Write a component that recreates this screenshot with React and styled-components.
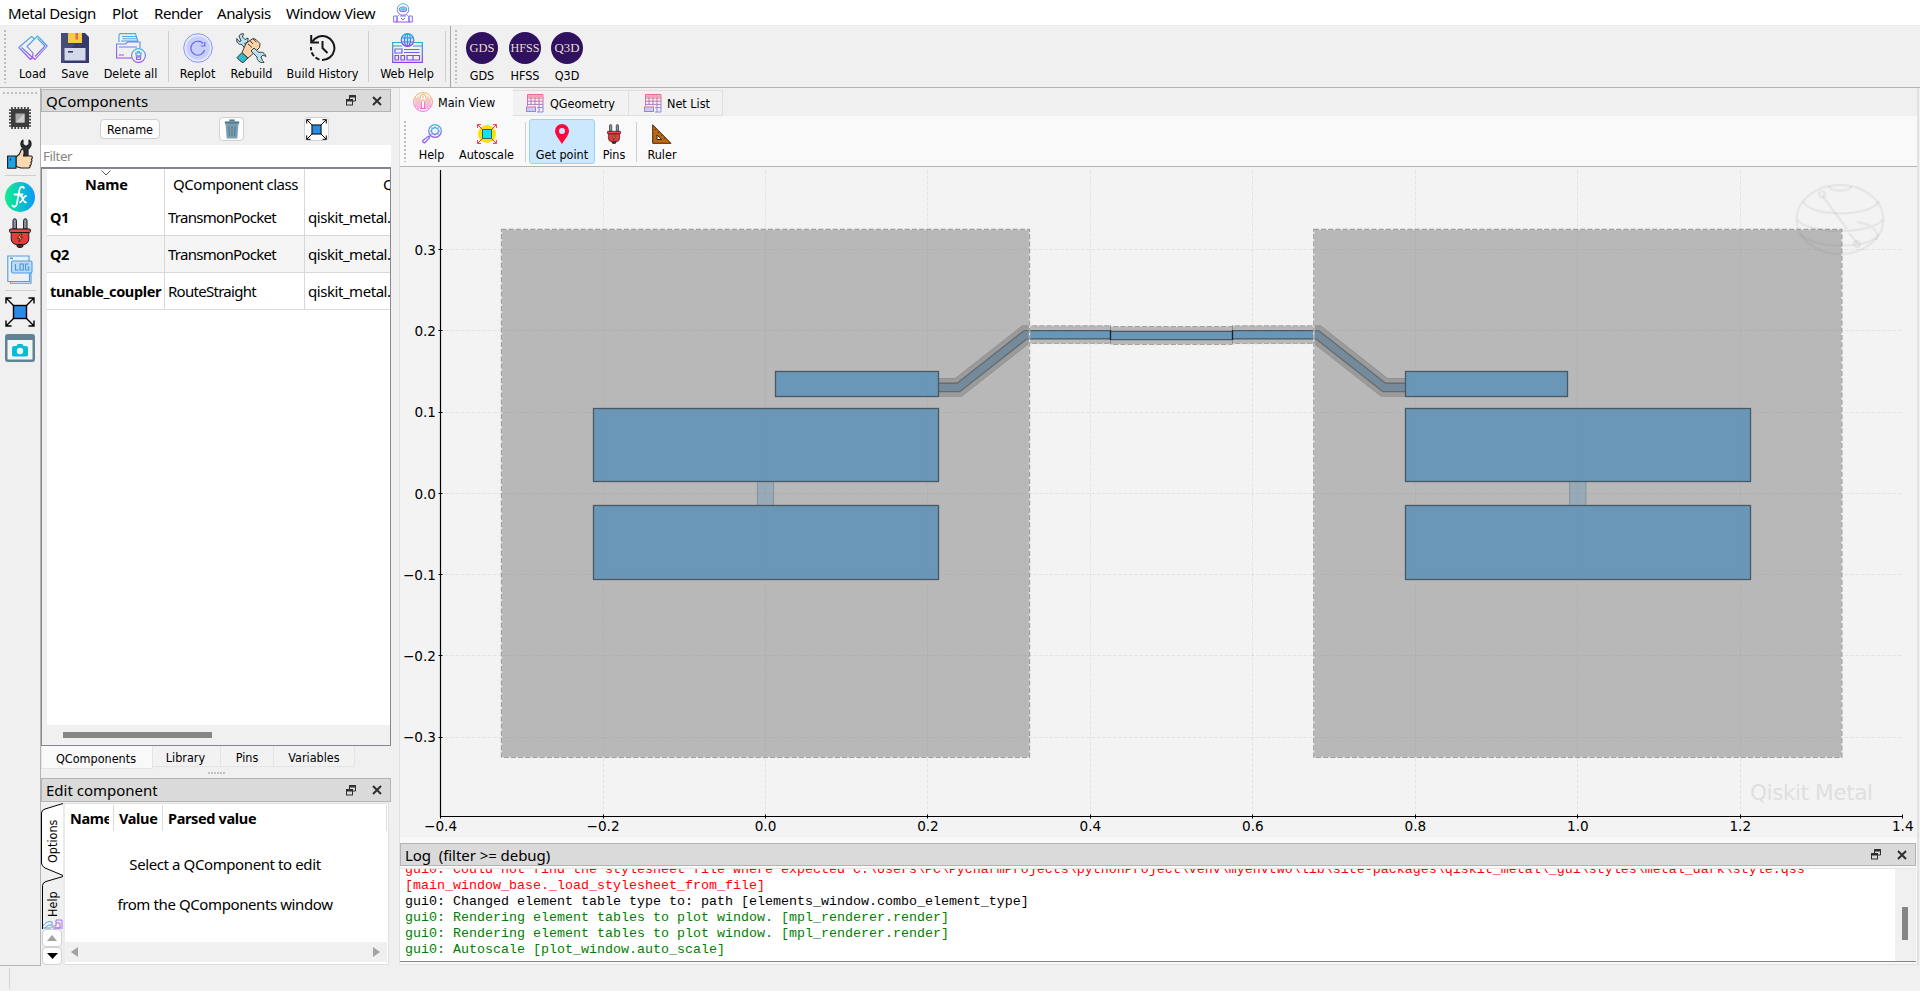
import React from "react";
import styled, { createGlobalStyle } from "styled-components";

const UI = `"Noto Sans", "Open Sans", sans-serif`;
const SMALL = `"DejaVu Sans", sans-serif`;

const Global = createGlobalStyle`
  html, body { margin: 0; padding: 0; overflow: hidden; background: #f0f0f0; }
  * { box-sizing: border-box; }
  svg { display: block; flex: none; }
`;

const Window = styled.div`
  width: 1920px;
  height: 991px;
  display: flex;
  flex-direction: column;
  background: #f0f0f0;
  color: #000;
  font: 15px ${UI};
  white-space: nowrap;
  overflow: hidden;
`;

/* ---------- menu + toolbars ---------- */
const MenuBar = styled.nav`
  height: 26px;
  flex: none;
  display: flex;
  align-items: center;
  padding-left: 8px;
  background: #fff;
  border-bottom: 1px solid #ececec;
`;
const MenuItem = styled.span`
  width: ${(p) => p.$w}px;
  line-height: 26px;
  font-size: 15px;
  letter-spacing: ${(p) => p.$ls || -0.4}px;
`;

const ToolBar = styled.div`
  height: 62px;
  flex: none;
  display: flex;
  align-items: stretch;
  border-bottom: 1px solid #b4b4b4;
`;
const ToolGroup = styled.div`
  display: flex;
  width: ${(p) => p.$w}px;
  border-right: ${(p) => (p.$edge ? "1px solid #a8a8a8" : "0")};
`;
const Grip = styled.div`
  width: 2px;
  margin: ${(p) => p.$m};
  background: repeating-linear-gradient(180deg, #bdbdbd 0 2px, transparent 2px 4px);
`;
const Tool = styled.button`
  width: ${(p) => p.$w}px;
  padding: ${(p) => p.$pt ?? 7}px 0 0;
  margin: 0;
  border: 0;
  background: none;
  display: flex;
  flex-direction: column;
  align-items: center;
  font: 12.5px/${(p) => p.$lh || 21}px ${SMALL};
  font-stretch: condensed;
  letter-spacing: ${(p) => p.$ls || 0}px;
  white-space: nowrap;
  color: #000;
`;
const ToolIcon = styled.span`
  height: ${(p) => p.$h}px;
  display: flex;
  align-items: center;
  justify-content: center;
`;
const VRule = styled.div`
  width: 1px;
  background: #cfcfcf;
  margin: ${(p) => p.$m};
`;

const Body = styled.div`
  height: 878px;
  flex: none;
  display: flex;
`;
const SideBar = styled.div`
  width: 41px;
  border-right: 1px solid #b4b4b4;
  border-bottom: 1px solid #b4b4b4;
  display: flex;
  flex-direction: column;
  align-items: center;
`;
const HGrip = styled.div`
  width: ${(p) => p.$w}px;
  height: 2px;
  margin: ${(p) => p.$m};
  background: repeating-linear-gradient(90deg, #c2c2c2 0 2px, transparent 2px ${(p) => p.$step || 4}px);
`;
const SideIcon = styled.div`
  height: 36px;
  width: 40px;
  display: flex;
  align-items: center;
  justify-content: center;
`;
const HRule = styled.div`
  width: 31px;
  height: 1px;
  margin: 3px 0;
  background: #cfcfcf;
`;

/* ---------- docks ---------- */
const LeftDock = styled.div`
  width: 350px;
  padding-top: 1px;
  display: flex;
  flex-direction: column;
`;
const DockTitle = styled.div`
  height: ${(p) => p.$h || 23}px;
  flex: none;
  display: flex;
  align-items: center;
  padding: 0 8px 0 4px;
  background: #dadada;
  border: 1px solid #b4b4b4;
  font-size: 15px;
  letter-spacing: ${(p) => p.$ls || 0}px;
`;
const Spacer = styled.div`
  flex: 1;
`;
const DockButtons = styled.div`
  display: flex;
  gap: 16px;
  align-items: center;
`;
const ActionRow = styled.div`
  height: 33px;
  flex: none;
  display: flex;
  align-items: center;
  padding: 1px 0 0 59px;
`;
const PushButton = styled.button`
  width: ${(p) => p.$w}px;
  height: ${(p) => p.$h}px;
  margin: 0 ${(p) => p.$mr || 0}px 0 0;
  padding: 0;
  display: flex;
  align-items: center;
  justify-content: center;
  background: #fdfdfd;
  border: 1px solid #d0d0d0;
  border-radius: 4px;
  font: 12.5px ${SMALL};
  font-stretch: condensed;
  color: #000;
`;
const FilterBox = styled.div`
  height: 23px;
  flex: none;
  background: #fff;
  border-bottom: 1px solid #868686;
  padding-left: 2px;
  line-height: 22px;
  font-size: 13.3px;
  letter-spacing: -0.4px;
  color: #858585;
`;
const TableFrame = styled.div`
  height: 578px;
  flex: none;
  background: #fff;
  border: 1px solid #828790;
  display: flex;
  flex-direction: column;
`;
const Table = styled.div`
  flex: 1;
  border-left: 5px solid #f0f0f0;
  overflow: hidden;
`;
const Row = styled.div`
  height: ${(p) => (p.$head ? 30 : 37)}px;
  display: grid;
  grid-template-columns: 118px 140px 85px;
  background: ${(p) => (p.$alt ? "#f5f5f5" : "#fff")};
  border-bottom: ${(p) => (p.$head ? "0" : "1px solid #d8d8d8")};
`;
const Cell = styled.div`
  position: relative;
  display: flex;
  align-items: center;
  justify-content: ${(p) => (p.$center ? "center" : "flex-start")};
  padding-left: ${(p) => (p.$center ? 2 : 3)}px;
  border-right: ${(p) => (p.$last ? "0" : "1px solid #d8d8d8")};
  font-weight: ${(p) => (p.$bold ? 700 : 400)};
  font-size: ${(p) => (p.$bold ? 14.5 : 15)}px;
  letter-spacing: ${(p) => p.$ls ?? -0.4}px;
`;
const CutLabel = styled.span`
  display: block;
  width: 7px;
  margin-left: auto;
  overflow: hidden;
`;
const SortMark = styled.svg`
  position: absolute;
  top: 1px;
  left: 54px;
`;
const HScroll = styled.div`
  height: 20px;
  flex: none;
  background: #f0f0f0;
  padding: 7px 0 0 21px;
`;
const Thumb = styled.div`
  width: ${(p) => p.$w}px;
  height: ${(p) => p.$h}px;
  background: #868686;
`;
const BottomTabs = styled.div`
  height: 23px;
  flex: none;
  display: flex;
  font: 12.5px/21px ${SMALL};
  font-stretch: condensed;
`;
const BottomTab = styled.div`
  width: ${(p) => p.$w}px;
  height: ${(p) => (p.$on ? 23 : 21)}px;
  padding: ${(p) => (p.$on ? 2 : 1)}px ${(p) => p.$pr || 0}px 0 0;
  text-align: center;
  background: ${(p) => (p.$on ? "#f9f9f9" : "#f2f2f2")};
  border: 1px solid #e4e4e4;
  border-top: 0;
  border-left-width: ${(p) => (p.$on ? 1 : 0)}px;
`;
const EditArea = styled.div`
  flex: 1;
  display: flex;
`;
const VTabs = styled.div`
  width: 22px;
  display: flex;
  flex-direction: column;
  padding-top: 1px;
`;
const VTab = styled.div`
  position: relative;
  width: 22px;
  height: ${(p) => p.$h}px;
  display: flex;
  justify-content: center;
  padding: ${(p) => p.$pt}px 0 0 2px;
  overflow: hidden;
  span {
    position: relative;
    writing-mode: vertical-rl;
    transform: rotate(180deg);
    height: ${(p) => p.$len}px;
    font: 12.5px/18px ${SMALL};
    font-stretch: condensed;
  }
  svg { position: absolute; left: 0; top: 0; }
`;
const SpinBtn = styled.div`
  width: 20px;
  height: 18px;
  margin: 0 0 0 1px;
  display: flex;
  align-items: center;
  justify-content: center;
  background: #fdfdfd;
  border: 1px solid #d0d0d0;
  border-radius: 4px;
`;
const EditPanel = styled.div`
  width: 326px;
  height: 162px;
  margin: 1px 0 0 0;
  border: 1px solid #e0e0e0;
  border-left: 2px solid #ebebeb;
  background: #fff;
  padding: 1px 1px 2px 0;
  display: flex;
  flex-direction: column;
`;
const EditHead = styled.div`
  height: 26px;
  flex: none;
  display: flex;
  font: 700 14.5px/27px ${UI};
  letter-spacing: -0.35px;
`;
const HeadCell = styled.div`
  width: ${(p) => p.$w}px;
  border-right: 1px solid #dcdcdc;
  padding-left: 5px;
`;
const NameClip = styled.span`
  display: block;
  width: 39px;
  overflow: hidden;
`;
const EditHint = styled.div`
  flex: 1;
  padding: 13px 2px 0 0;
  text-align: center;
  line-height: 40px;
  font-size: 15px;
  letter-spacing: -0.4px;
`;
const EditScroll = styled.div`
  height: 20px;
  flex: none;
  display: flex;
  align-items: center;
  justify-content: space-between;
  padding: 0 7px 0 6px;
  background: #f0f0f0;
`;

/* ---------- centre ---------- */
const Center = styled.div`
  width: 1520px;
  margin-left: 8px;
  border-left: 1px solid #e2e2e2;
  border-right: 2px solid #e2e2e2;
  height: 877px;
  border-bottom: 1px solid #e0e0e0;
  display: flex;
  flex-direction: column;
  background: #f9f9f9;
`;
const TabStrip = styled.div`
  height: 28px;
  flex: none;
  display: flex;
  align-items: flex-end;
  background: #f0f0f0;
`;
const Tab = styled.div`
  width: ${(p) => p.$w}px;
  height: ${(p) => (p.$on ? 28 : 26)}px;
  display: flex;
  align-items: center;
  gap: ${(p) => p.$gap || 5}px;
  padding-left: ${(p) => p.$pl}px;
  background: ${(p) => (p.$on ? "#f9f9f9" : "#f2f2f2")};
  border: 1px solid ${(p) => (p.$on ? "#f9f9f9" : "#e0e0e0")};
  border-left: 0;
  font: 12.5px ${SMALL};
  font-stretch: condensed;
`;
const PlotTools = styled.div`
  height: 51px;
  flex: none;
  display: flex;
  border-bottom: 1px solid #b4b4b4;
`;
const ActiveTool = styled(Tool)`
  background: #cce8ff;
  border: 1px solid #99d1ff;
  border-radius: 3px;
  margin-top: 3px;
  height: 45px;
`;
const PlotWrap = styled.div`
  height: 670px;
  flex: none;
  background: #f3f3f3;
`;
const LogTitle = styled(DockTitle)`
  margin: 6px 1px 0 0;
  height: 23px;
`;
const LogBox = styled.div`
  height: 94px;
  margin: 2px 1px 0 0;
  background: #fff;
  border-top: 1px solid #e4e4e4;
  border-bottom: 1px solid #868686;
  display: flex;
  overflow: hidden;
`;
const LogText = styled.div`
  flex: 1;
  overflow: hidden;
  padding-left: 5px;
`;
const LogLine = styled.div`
  height: 16px;
  margin-top: ${(p) => p.$mt || 0}px;
  font: 13.33px/16px "Liberation Mono", monospace;
  white-space: pre;
  color: ${(p) => p.$c || "#000"};
`;
const VScroll = styled.div`
  width: 21px;
  background: #f0f0f0;
  padding: 38px 0 0 7px;
`;
const StatusBar = styled.div`
  flex: 1;
  padding: 2px 0 2px 9px;
`;
const StatusRule = styled.div`
  width: 1px;
  height: 21px;
  background: #d4d4d4;
`;

/* ---------- icons ---------- */
const Grad = ({ id, a = "#3fb6de", b = "#9a4df5" }) => (
  <defs>
    <linearGradient id={id} x1="0" y1="0" x2="0" y2="1" gradientUnits="objectBoundingBox">
      <stop offset="0" stopColor={a} />
      <stop offset="1" stopColor={b} />
    </linearGradient>
  </defs>
);

const AstroIcon = () => (
  <svg width="20" height="20" viewBox="0 0 20 20" fill="none" stroke="url(#ga)" strokeWidth="1">
    <Grad id="ga" />
    <circle cx="10" cy="6.5" r="5.8" />
    <rect x="6.3" y="4" width="7.4" height="4.6" rx="2.2" fill="#8fd0ec" />
    <path d="M8 6.3h4M6 11.8l-2 2v5.5M14 11.8l2 2v5.5M4 19h12M.7 19v-6h3.3v6zM16 19v-6h3.3v6zM8 15l2 2 2-2M7 13h6" />
  </svg>
);
const LoadIcon = () => (
  <svg width="30" height="26" viewBox="0 0 30 26" fill="none" stroke="url(#gl)" strokeWidth="1.1" strokeLinejoin="round">
    <Grad id="gl" />
    <path d="M.8 12.5L13.500 1.500l3 2.500 3-3 3 3L29.2 11 17 24.5l-2.500-2-2 2L.8 12.5z" />
    <path d="M3.500 12.500L14.500 22.500M16.500 4l-7.500 7.500 6 6.500L14.500 22.500M19.500 3.500L27 11 17 21.500" />
  </svg>
);
const SaveIcon = () => (
  <svg width="28" height="30" viewBox="0 0 28 30">
    <path d="M0 0h24l4 4v26H0z" fill="#35396b" />
    <path d="M0 0h7v11h7L3 22v8H0z" fill="#474c80" />
    <rect x="7" width="14" height="10" fill="#f6cb45" />
    <rect x="14.500" width="2.500" height="6.500" fill="#e0703e" />
    <rect x="3.500" y="15" width="21" height="12.500" fill="#d3d8ea" />
    <rect x="7" y="18" width="5" height="1.6" fill="#35396b" />
  </svg>
);
const DeleteAllIcon = () => (
  <svg width="30" height="30" viewBox="0 0 30 30" fill="none" stroke="url(#gd)" strokeWidth="1.1">
    <Grad id="gd" />
    <path d="M3 9V2.5C3 1 4 .6 5 .6h14.5L22 9M6 3.5h14M6.5 5.8h14M5 8h16M.6 25V11h9l2-2H24v6M.6 12.5V25H16M3 14h18M3 22h5" />
    <circle cx="22.5" cy="22.5" r="6.9" />
    <path d="M19 20h7M20 20l.6 6.5h3.8L25 20M21.5 20v-1.5h2V20M21.8 22v3M23.2 22v3" />
  </svg>
);
const ReplotIcon = () => (
  <svg width="30" height="30" viewBox="0 0 30 30" fill="none">
    <circle cx="15" cy="15" r="14.3" fill="#e6e9fc" stroke="#8b95ee" strokeWidth="1" />
    <circle cx="15" cy="15" r="11.8" fill="#c9cffc" />
    <path d="M20 10.5A7 7 0 1 0 21.6 17" stroke="#6368e8" strokeWidth="1.2" />
    <path d="M21.8 9v4h-4" stroke="#6368e8" strokeWidth="1.2" />
  </svg>
);
const RebuildIcon = () => (
  <svg width="31" height="30" viewBox="0 0 31 30" stroke="#2b2b2b" strokeWidth=".9" strokeLinejoin="round">
    <path d="M7.5.8L6.5 4 9 6.5l3-1.5c.5 3-1 5-3.5 5.6l3 3-2.5 2-3-4C2 11.500 0 9 .8 5.500L3 8.500 5 8 3 3C4 1 5.500.6 7.500.8z" fill="#b5e3f0" />
    <path d="M1 24.500l5-5 6 5.500-5 4.700C4.500 28.500 2.500 27 1 24.500z" fill="#35b8c9" />
    <path d="M6 19.500l4-9 4-3 3-2 3 1 2 2 2 2-.5 4-4 4-4 3.500-3.500 3z" fill="#fcd2a6" />
    <path d="M14 7.500l3 3.500M17 5.800l3.500 3.500M12 11l4 3.500" fill="none" />
    <path d="M15 18l3-3 5 4.500c3-1 6 .5 7 4l-3-1.500-2 2 1.500 3.500 1.500 2c-4 .5-7-1.500-7-5.500z" fill="#b5e3f0" />
  </svg>
);
const HistoryIcon = () => (
  <svg width="27" height="28" viewBox="0 0 27 28" fill="none" stroke="#161616" strokeWidth="2">
    <path d="M3 8A12 12 0 1 1 13 26" />
    <path d="M10.500 25.600A12 12 0 0 1 2 13" strokeDasharray="4.500 2" />
    <path d="M2.200 1v7.500H10M13.500 7v7l5 5" />
  </svg>
);
const WebIcon = () => (
  <svg width="31" height="30" viewBox="0 0 31 30" fill="none" stroke="url(#gw)" strokeWidth="1.2">
    <Grad id="gw" a="#27a9dd" b="#8c3ff0" />
    <path d="M9 9.500H.7v19.800h29.600V9.500H22M.7 13H10M21 13h9.300" />
    <circle cx="15.500" cy="7" r="6.300" fill="#cfeaf6" />
    <ellipse cx="15.500" cy="7" rx="3" ry="6.300" />
    <path d="M9.500 4.800h12M9.500 9h12M15.500.7v12.600M3 16h7v4H3zM12 16.500h15.500M12 19.500h15.500M3 22.500h3.500v4.500H3zM9 22.500h3.500v4.500H9zM15 22.500h12.500v4.500H15zM21 22.500v4.500" />
  </svg>
);
const Badge = ({ label }) => (
  <svg width="32" height="32" viewBox="0 0 32 32">
    <circle cx="16" cy="16" r="16" fill="#2f1160" />
    <text x="16" y="19.500" textAnchor="middle" fontFamily="Liberation Serif" fontSize="12" fill="#eadfcb" textLength={label === "HFSS" ? 29 : 25} lengthAdjust="spacingAndGlyphs">{label}</text>
  </svg>
);
const ChipIcon = () => (
  <svg width="22" height="22" viewBox="0 0 22 22">
    <path d="M3 0v22M6.200 0v22M9.400 0v22M12.600 0v22M15.800 0v22M19 0v22M0 3h22M0 6.200h22M0 9.400h22M0 12.600h22M0 15.800h22M0 19h22" stroke="#444" strokeWidth="1.700" />
    <rect x="2" y="2" width="18" height="18" fill="#3d3d3d" />
    <rect x="6.500" y="6.500" width="9" height="9" fill="#a9a9a9" />
    <path d="M6.500 15.500l9-9v9z" fill="#cfcfcf" />
  </svg>
);
const ThumbIcon = () => (
  <svg width="26" height="30" viewBox="0 0 26 30" stroke="#1c1c1c" strokeWidth="1.100" strokeLinejoin="round">
    <path d="M16 1v4.500l3 2 3-2V1c2.500 1.500 3 5 .5 8L21 10v9h-4v-9l-1.500-1C13 6 13.500 2.500 16 1z" fill="#2f2f38" />
    <path d="M9 18l3.500-3 2-5c2 0 3 2 2.500 4.500L16.500 17H24c1.700 0 1.700 3 .3 3.200 1 .5.800 3-.5 3.200.8.600.5 2.800-.8 3 .5.800 0 2.600-1.500 2.600H14l-5-1.500z" fill="#fbd9ae" />
    <rect x=".6" y="17" width="8.400" height="12.300" fill="#19a3e8" />
    <path d="M3.500 19.500v2" />
  </svg>
);
const FxIcon = () => (
  <svg width="30" height="30" viewBox="0 0 30 30">
    <defs>
      <linearGradient id="gf" x1="0" y1="0" x2="1" y2="0">
        <stop offset="0" stopColor="#10ee8c" />
        <stop offset=".5" stopColor="#0bc6c4" />
        <stop offset="1" stopColor="#0a97fb" />
      </linearGradient>
    </defs>
    <circle cx="15" cy="15" r="15" fill="url(#gf)" />
    <path d="M19 6c-1-2-4-1.500-4.500 1.500L11.800 22c-.6 3-3 3.500-4.300 1.600M9.500 12.500h8M15.500 14c2.500-.5 2 7 5.500 6.300M21 14c-2-.5-4 6-6 6.300" fill="none" stroke="#fff" strokeWidth="1.800" strokeLinecap="round" />
  </svg>
);
const PlugIcon = ({ w = 22, h = 30 }) => (
  <svg width={w} height={h} viewBox="0 0 22 30" preserveAspectRatio="none" stroke="#1a1a1a" strokeWidth="1">
    <path d="M4 11V2.500a1.600 1.600 0 0 1 3.400 0V11zM14.600 11V2.500a1.600 1.600 0 0 1 3.400 0V11z" fill="#8d96a3" />
    <path d="M8 26h6v2.500l-2 1h-2l-2-1z" fill="#333" />
    <path d="M2.200 14.500h17.600V21a5.500 5.500 0 0 1-5.500 5.500H7.700A5.500 5.500 0 0 1 2.200 21z" fill="#e23b3b" />
    <rect x=".6" y="11" width="20.800" height="3.500" rx="1" fill="#e84a48" />
    <path d="M11.500 16L8.500 20.500h2.300L10 24l3.600-4.700h-2.300L12.800 16z" fill="#f5b83a" strokeWidth=".7" />
  </svg>
);
const LogIcon = () => (
  <svg width="26" height="29" viewBox="0 0 26 29" fill="none" stroke="#4a9fe6" strokeWidth="1.100">
    <path d="M3 26.500H.8V1H22v5M22.500 18v8.500H3.500V28.300H24V18" />
    <rect x="4.500" y="6" width="20.500" height="12" rx="1.500" fill="#b9dcfb" />
    <rect x="3" y="2.500" width="3" height="1.600" fill="#4a9fe6" stroke="none" />
    <path d="M8.500 9v6h3M13 9h3.300v6H13zM21.800 9h-3.300v6h3.300v-3h-1.500" stroke="#4c92d6" />
  </svg>
);
const ExpandIcon = ({ s = 30 }) => (
  <svg width={s} height={s} viewBox="0 0 30 30" fill="none" stroke="#000" strokeWidth="1.400">
    <path d="M1 6.500V1h5.500M1 1l7.500 7.500M23.500 1H29v5.500M29 1l-7.500 7.500M1 23.500V29h5.500M1 29l7.500-7.500M23.500 29H29v-5.500M29 29l-7.500-7.500" />
    <rect x="8.500" y="8.500" width="13" height="13" fill="#2a8ae6" />
  </svg>
);
const CameraIcon = () => (
  <svg width="30" height="28" viewBox="0 0 30 28">
    <rect width="30" height="28" rx="3" fill="#5f8294" />
    <rect x="2.500" y="6" width="25" height="19.500" fill="#f3f6f7" />
    <path d="M9 12h2.500l1.200-2h4.600l1.200 2H21q2 0 2 2v7q0 1.500-2 1.500H9q-2 0-2-1.500v-7q0-2 2-2z" fill="#08bcd8" />
    <circle cx="15" cy="17" r="3.200" fill="#f3f6f7" />
  </svg>
);
const TrashIcon = () => (
  <svg width="16" height="20" viewBox="0 0 18 21" preserveAspectRatio="none">
    <path d="M1.700 4.500h14.600L15 20.500H3z" fill="#7ba0b3" />
    <path d="M1 2.500h16v2.500H1z" fill="#557b8d" />
    <rect x="6" y=".5" width="6" height="2" fill="#557b8d" />
    <path d="M5.500 7l.6 11M9 7v11M12.500 7l-.6 11" stroke="#557b8d" strokeWidth="1.200" />
  </svg>
);
const RestoreIcon = () => (
  <svg width="10" height="11" viewBox="0 0 10 11" fill="none" stroke="#2f2f2f" strokeWidth="1">
    <path d="M3.500 4V.5h6V6H7" />
    <path d="M3 1.500h7" strokeWidth="2" />
    <rect x=".5" y="4.500" width="6" height="5.500" />
    <path d="M0 5.500h7" strokeWidth="2" />
  </svg>
);
const CloseIcon = () => (
  <svg width="10" height="10" viewBox="0 0 10 10" stroke="#2f2f2f" strokeWidth="2">
    <path d="M1 1l8 8M9 1L1 9" />
  </svg>
);
const MainViewIcon = () => (
  <svg width="20" height="20" viewBox="0 0 20 20" fill="none" stroke="url(#gm)" strokeWidth="1">
    <Grad id="gm" a="#f2b45c" b="#e86ae0" />
    <circle cx="10" cy="10" r="9.400" />
    <path d="M7 16.500V5.500a3 3 0 0 1 6 0v11M8.500 16V9.500a1.500 1.500 0 0 1 3 0V16M5 17V4.500M15 17V4.500M3 15V6M17 15V6M7 16.500h6M10 4v2" />
  </svg>
);
const GridIcon = () => (
  <svg width="18" height="19" viewBox="0 0 18 19" fill="none" stroke="url(#gg)" strokeWidth="1">
    <Grad id="gg" a="#ee6a86" b="#7b8ff2" />
    <path d="M1.500 12V.5h15.500v17.500H11M1.500 4h15.500M1.500 7.200h15.500M1.500 10.400h15.500M11 13.600h6M5 .5v10M9 .5v11M13 .5V18" />
    <path d="M2 2.200h15" stroke="#f3a1b4" strokeWidth="2" />
    <rect x=".5" y="13" width="9" height="4.500" fill="#c3cdfb" />
    <path d="M2 15.500h6" />
  </svg>
);
const HelpIcon = () => (
  <svg width="20" height="20" viewBox="0 0 20 20" fill="none" stroke="url(#gh)" strokeWidth="1.200">
    <Grad id="gh" />
    <circle cx="13" cy="7" r="6.300" />
    <path d="M13 3l1.200 1.300 1.800-.3v1.900L17.200 7 16 8.300v1.600l-1.800-.2L13 11l-1.300-1.300-1.700.2V8.200L8.800 7 10 5.900V4l1.800.3zM8.500 11.500l-1.500 1.500M7.500 13.800L3 18.500c-1 1-3-.8-2-2l5.200-4.200z" />
  </svg>
);
const AutoscaleIcon = () => (
  <svg width="20" height="20" viewBox="0 0 20 20" fill="none">
    <circle cx="10" cy="10" r="9" fill="#ffe100" />
    <path d="M.6 4V.6H4M.6.6l5 5M16 .6h3.400V4M19.400.6l-5 5M.6 16v3.400H4M.6 19.400l5-5M16 19.400h3.400V16M19.400 19.400l-5-5" stroke="#ee3340" strokeWidth="1" />
    <rect x="5.500" y="5.500" width="9" height="9" fill="#12dff8" stroke="#35606e" strokeWidth="1" />
  </svg>
);
const PinIcon = () => (
  <svg width="14" height="20" viewBox="0 0 14 20">
    <path fillRule="evenodd" d="M7 0a7 7 0 0 1 7 7c0 4-4 8-7 13C4 15 0 11 0 7a7 7 0 0 1 7-7zm0 4a3 3 0 1 0 0 6 3 3 0 0 0 0-6z" fill="#fb0a3a" />
  </svg>
);
const RulerIcon = () => (
  <svg width="20" height="20" viewBox="0 0 20 20">
    <path fillRule="evenodd" d="M.7.800L19 19.300H.7zM5 11v4.500h4.800z" fill="#c2660c" stroke="#3a2a1a" strokeWidth="1" />
    <path d="M4 5l-1.200 1.200M7 8l-1.200 1.200M10 11l-1.200 1.200M13 14l-1.200 1.200" stroke="#3a2a1a" strokeWidth=".8" />
  </svg>
);

/* ---------- chart ---------- */
const X = (v) => 765.5 + 812.3 * v;
const Y = (v) => 493.4 - 812.3 * v;
const xTicks = [-0.4, -0.2, 0, 0.2, 0.4, 0.6, 0.8, 1.0, 1.2, 1.4];
const yTicks = [0.3, 0.2, 0.1, 0, -0.1, -0.2, -0.3];
const fmt = (v) => (v < 0 ? "−" : "") + Math.abs(v).toFixed(1);
const BLUE = "#6a97b7";

const Pad = ({ x0, x1, y0, y1 }) => {
  const l = Math.floor(X(x0) + 0.2) + 0.5;
  const r = Math.floor(X(x1) + 0.2) + 0.5;
  const t = Math.floor(Y(y1)) + 0.5;
  const b = Math.floor(Y(y0) + 0.5) + 0.5;
  return (
    <rect x={l} y={t} width={r - l} height={b - t} fill={BLUE} stroke="#485965" strokeWidth="1.300" />
  );
};
const Transmon = ({ c, side }) => (
  <g>
    <rect x={X(c - 0.01)} y={Y(0.015)} width="16.200" height="24.400" fill="#98aab7" stroke="#8093a0" strokeWidth="1" />
    <Pad x0={c - 0.2125} x1={c + 0.2125} y0={0.015} y1={0.105} />
    <Pad x0={c - 0.2125} x1={c + 0.2125} y0={-0.105} y1={-0.015} />
    <Pad x0={side > 0 ? c + 0.0125 : c - 0.2125} x1={side > 0 ? c + 0.2125 : c - 0.0125} y0={0.12} y1={0.15} />
  </g>
);
const Pocket = ({ c }) => {
  const r = { x: X(c - 0.325), y: Y(0.325), width: 528, height: 528 };
  return (
    <g>
      <rect {...r} fill="#808080" fillOpacity=".51" />
      <rect {...r} fill="none" stroke="#e6e6e6" strokeWidth="1.300" />
      <rect {...r} fill="none" stroke="#a0a0a0" strokeWidth="1.300" strokeDasharray="5 2.200" />
    </g>
  );
};
/* A coplanar line: dashed gap outline, dark trace edge, blue core */
const Trace = ({ d }) => (
  <g fill="none" strokeLinejoin="miter">
    <path d={d} stroke="#a2a2a2" strokeWidth="18.800" />
    <path d={d} stroke="#b8b8b8" strokeWidth="17" />
    <path d={d} stroke="#475862" strokeWidth="9.600" />
    <path d={d} stroke={BLUE} strokeWidth="7" />
  </g>
);
const leftTrace = "M938.500 387.400H958.400L1025.500 334.700H1110.500";
const rightTrace = "M1405 387.400H1384.300L1317.300 334.700H1232.500";

const Plot = () => (
  <svg width="1517" height="670" viewBox="400 167 1517 670" fontFamily="DejaVu Sans" fontSize="13.600">
    <Trace d={leftTrace} />
    <Trace d={rightTrace} />
    <Trace d="M1110.500 335.500H1232.500" />
    <path d="M1030 325.600H1110M1030 343.800H1110M1233 325.600H1313M1233 343.800H1313M1111 326.400H1232M1111 344.600H1232" stroke="#e2e2e2" strokeWidth="1.200" strokeDasharray="2.200 5" />
    <path d="M1110.500 330v10M1232.500 330v10" stroke="#14222c" strokeWidth="1.300" />
    <path d="M1110.500 325.500v4.500M1110.500 340v4M1232.500 325.500v4.500M1232.500 340v4" stroke="#8c8c8c" strokeWidth="1" />
    <Pocket c={0} />
    <Pocket c={1} />
    <Transmon c={0} side={1} />
    <Transmon c={1} side={-1} />
    <g stroke="#808080" strokeOpacity=".13" strokeDasharray="3.700 1.600" strokeWidth="1">
      {xTicks.slice(1, -1).map((v) => (
        <path key={v} d={`M${Math.floor(X(v)) + 0.5} 170V816`} />
      ))}
      {yTicks.map((v) => (
        <path key={v} d={`M440 ${Math.floor(Y(v)) + 0.5}H1902`} />
      ))}
    </g>
    <g fill="none" stroke="#808080" strokeOpacity=".11" strokeWidth="2.400">
      <ellipse cx="1840" cy="219.500" rx="43.500" ry="34.500" />
      <path d="M1803 201c5 16 68 17 76 0M1797 219c8 16 77 16 86 0M1801 234c10 15 70 16 78 0M1829 186c0 6 22 6 22 0M1876 240c4-8-4-16-19-18" />
      <path d="M1822 195L1847 229M1849 233l9 11" />
      <circle cx="1822" cy="194.500" r="3" />
      <circle cx="1857" cy="244" r="3" />
    </g>
    <text x="1750" y="800" fontSize="21.700" fill="#dfdfdf" textLength="123">Qiskit Metal</text>
    <path d="M440.500 170V816.500H1902.500" fill="none" stroke="#000" strokeWidth="1.200" />
    {xTicks.map((v) => (
      <g key={v}>
        <path d={`M${Math.floor(X(v)) + 0.5} 814.500v4`} stroke="#000" />
        <text x={X(v)} y="831" textAnchor="middle">{fmt(v)}</text>
      </g>
    ))}
    {yTicks.map((v) => (
      <g key={v}>
        <path d={`M438.500 ${Math.floor(Y(v)) + 0.5}h4`} stroke="#000" />
        <text x="436" y={Y(v) + 5.200} textAnchor="end">{fmt(v)}</text>
      </g>
    ))}
  </svg>
);

const TitleButtons = () => (
  <DockButtons>
    <RestoreIcon />
    <CloseIcon />
  </DockButtons>
);

const rows = [
  ["Q1", "TransmonPocket"],
  ["Q2", "TransmonPocket"],
  ["tunable_coupler", "RouteStraight"],
];

export default function App() {
  return (
    <Window>
      <Global />
      <MenuBar>
        <MenuItem $w={104}>Metal Design</MenuItem>
        <MenuItem $w={42}>Plot</MenuItem>
        <MenuItem $w={63}>Render</MenuItem>
        <MenuItem $w={69}>Analysis</MenuItem>
        <MenuItem $w={107}>Window View</MenuItem>
        <AstroIcon />
      </MenuBar>

      <ToolBar>
        <ToolGroup $w={451} $edge>
          <Grip $m="4px 6px 4px 4px" />
          <Tool $w={41}><ToolIcon $h={30}><LoadIcon /></ToolIcon>Load</Tool>
          <Tool $w={44}><ToolIcon $h={30}><SaveIcon /></ToolIcon>Save</Tool>
          <Tool $w={67}><ToolIcon $h={30}><DeleteAllIcon /></ToolIcon>Delete all</Tool>
          <VRule $m="5px 3px 5px 4px" />
          <Tool $w={51}><ToolIcon $h={30}><ReplotIcon /></ToolIcon>Replot</Tool>
          <Tool $w={57}><ToolIcon $h={30}><RebuildIcon /></ToolIcon>Rebuild</Tool>
          <Tool $w={85}><ToolIcon $h={30}><HistoryIcon /></ToolIcon>Build History</Tool>
          <VRule $m="5px 3px 5px 3px" />
          <Tool $w={70}><ToolIcon $h={30}><WebIcon /></ToolIcon>Web Help</Tool>
          <VRule $m="5px 2px 5px 3px" />
        </ToolGroup>
        <Grip $m="4px 4px 4px 4px" />
        <Tool $w={42} $pt={6} $lh={23}><ToolIcon $h={32}><Badge label="GDS" /></ToolIcon>GDS</Tool>
        <Tool $w={44} $pt={6} $lh={23}><ToolIcon $h={32}><Badge label="HFSS" /></ToolIcon>HFSS</Tool>
        <Tool $w={40} $pt={6} $lh={23}><ToolIcon $h={32}><Badge label="Q3D" /></ToolIcon>Q3D</Tool>
      </ToolBar>

      <Body>
        <SideBar>
          <HGrip $w={34} $m="4px 0 6px" />
          <SideIcon><ChipIcon /></SideIcon>
          <SideIcon><ThumbIcon /></SideIcon>
          <HRule />
          <SideIcon><FxIcon /></SideIcon>
          <SideIcon><PlugIcon /></SideIcon>
          <SideIcon><LogIcon /></SideIcon>
          <HRule />
          <SideIcon><ExpandIcon /></SideIcon>
          <SideIcon><CameraIcon /></SideIcon>
        </SideBar>

        <LeftDock>
          <DockTitle>QComponents<Spacer /><TitleButtons /></DockTitle>
          <ActionRow>
            <PushButton $w={60} $h={20} $mr={59}>Rename</PushButton>
            <PushButton $w={25} $h={24} $mr={60}><TrashIcon /></PushButton>
            <PushButton $w={25} $h={24}><ExpandIcon s={21} /></PushButton>
          </ActionRow>
          <FilterBox>Filter</FilterBox>
          <TableFrame>
            <Table>
              <Row $head>
                <Cell $center $bold $ls={-0.1}>
                  <SortMark width="10" height="6" viewBox="0 0 10 6"><path d="M.5.500L5 5 9.500.500" fill="none" stroke="#555" /></SortMark>
                  Name
                </Cell>
                <Cell $center $ls={-0.5}>QComponent class</Cell>
                <Cell $last><CutLabel>Q</CutLabel></Cell>
              </Row>
              {rows.map(([name, cls], i) => (
                <Row key={name} $alt={i === 1}>
                  <Cell $bold $ls={-0.36}>{name}</Cell>
                  <Cell $ls={-0.72}>{cls}</Cell>
                  <Cell $last $ls={-0.45}>qiskit_metal.</Cell>
                </Row>
              ))}
            </Table>
            <HScroll><Thumb $w={149} $h={6} /></HScroll>
          </TableFrame>
          <BottomTabs>
            <BottomTab $w={112} $pr={2} $on>QComponents</BottomTab>
            <BottomTab $w={68} $pr={2}>Library</BottomTab>
            <BottomTab $w={53}>Pins</BottomTab>
            <BottomTab $w={81}>Variables</BottomTab>
          </BottomTabs>
          <HGrip $w={18} $step={3} $m="3px 0 4px 167px" />
          <DockTitle $h={24}>Edit component<Spacer /><TitleButtons /></DockTitle>
          <EditArea>
            <VTabs>
              <VTab $h={73} $pt={14} $len={46}>
                <svg width="22" height="73" viewBox="0 0 22 73">
                  <path d="M22 .500L4 6Q.5 7 .5 10V60Q.5 63 4 65L22 72.500z" fill="#fff" />
                  <path d="M22 .500L4 6Q.5 7 .5 10V60Q.5 63 4 65L22 72.500" fill="none" stroke="#000" />
                </svg>
                <span>Options</span>
              </VTab>
              <VTab $h={53} $pt={14} $len={27}>
                <svg width="22" height="53" viewBox="0 0 22 53">
                  <path d="M22 .500L5 5.500Q1.500 6.500 1.500 9.500V53" fill="none" stroke="#000" />
                  <g fill="none" strokeWidth="1">
                    <path d="M2 50q4-6 9-4v6M4 52q3-4 6-3M2 52h8" stroke="#5a9fdc" />
                    <path d="M12 50h3v-6h6v9M15 47h4v5h-5M12 52h8" stroke="#a770ee" />
                  </g>
                </svg>
                <span>Help</span>
              </VTab>
              <SpinBtn><svg width="10" height="6"><path d="M0 6L5 0l5 6z" fill="#a3a3a3" /></svg></SpinBtn>
              <SpinBtn><svg width="11" height="6"><path d="M0 0h11L5.500 6z" fill="#000" /></svg></SpinBtn>
            </VTabs>
            <EditPanel>
              <EditHead>
                <HeadCell $w={49}><NameClip>Name</NameClip></HeadCell>
                <HeadCell $w={49}>Value</HeadCell>
                <HeadCell $w={224}>Parsed value</HeadCell>
              </EditHead>
              <EditHint>
                Select a QComponent to edit<br />from the QComponents window
              </EditHint>
              <EditScroll>
                <svg width="7" height="10"><path d="M7 0v10L0 5z" fill="#a3a3a3" /></svg>
                <svg width="7" height="10"><path d="M0 0v10l7-5z" fill="#a3a3a3" /></svg>
              </EditScroll>
            </EditPanel>
          </EditArea>
        </LeftDock>

        <Center>
          <TabStrip>
            <Tab $w={113} $pl={13} $on><MainViewIcon />Main View</Tab>
            <Tab $w={116} $pl={13} $gap={6}><GridIcon />QGeometry</Tab>
            <Tab $w={94} $pl={15} $gap={5}><GridIcon />Net List</Tab>
          </TabStrip>
          <PlotTools>
            <Grip $m="5px 5px 4px 4px" />
            <Tool $w={41} $pt={7}><ToolIcon $h={21}><HelpIcon /></ToolIcon>Help</Tool>
            <Tool $w={69} $pt={7}><ToolIcon $h={21}><AutoscaleIcon /></ToolIcon>Autoscale</Tool>
            <VRule $m="6px 3px 4px 4px" />
            <ActiveTool $w={66} $pt={4}><ToolIcon $h={22}><PinIcon /></ToolIcon>Get point</ActiveTool>
            <Tool $w={38} $pt={7}><ToolIcon $h={21}><PlugIcon w={14} h={20} /></ToolIcon>Pins</Tool>
            <VRule $m="6px 4px 4px 3px" />
            <Tool $w={42} $pt={7}><ToolIcon $h={21}><RulerIcon /></ToolIcon>Ruler</Tool>
          </PlotTools>
          <PlotWrap><Plot /></PlotWrap>
          <LogTitle $ls={-0.05}>Log&nbsp; (filter &gt;= debug)<Spacer /><TitleButtons /></LogTitle>
          <LogBox>
            <LogText>
              <LogLine $c="#f00" $mt={-7}>{"gui0: Could not find the stylesheet file where expected C:\\Users\\PC\\PycharmProjects\\pythonProject\\venv\\myenvtwo\\lib\\site-packages\\qiskit_metal\\_gui\\styles\\metal_dark\\style.qss"}</LogLine>
              <LogLine $c="#f00">[main_window_base._load_stylesheet_from_file]</LogLine>
              <LogLine>gui0: Changed element table type to: path [elements_window.combo_element_type]</LogLine>
              <LogLine $c="#008000">gui0: Rendering element tables to plot window. [mpl_renderer.render]</LogLine>
              <LogLine $c="#008000">gui0: Rendering element tables to plot window. [mpl_renderer.render]</LogLine>
              <LogLine $c="#008000">gui0: Autoscale [plot_window.auto_scale]</LogLine>
            </LogText>
            <VScroll><Thumb $w={6} $h={33} /></VScroll>
          </LogBox>
        </Center>
      </Body>

      <StatusBar><StatusRule /></StatusBar>
    </Window>
  );
}
